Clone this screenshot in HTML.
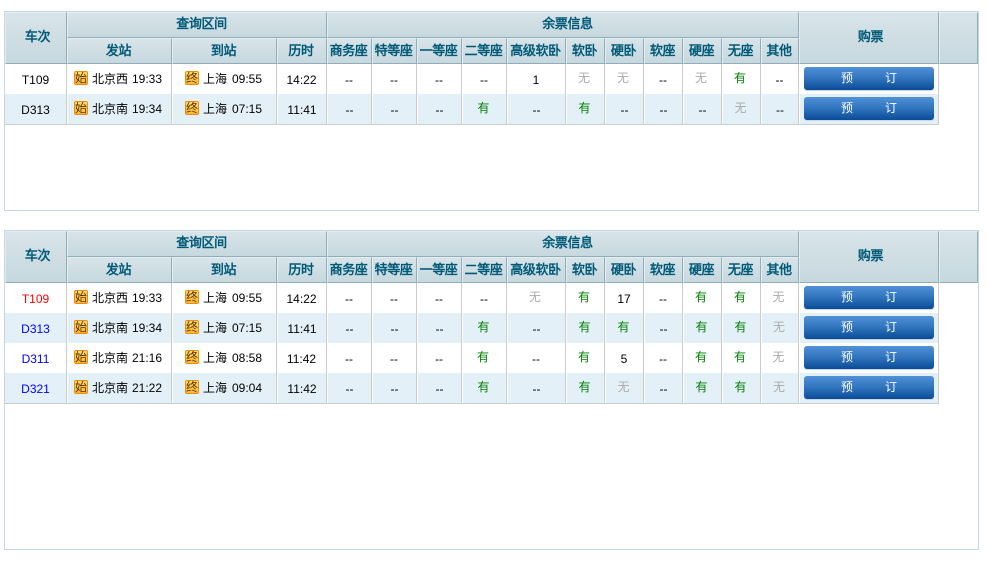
<!DOCTYPE html>
<html><head><meta charset="utf-8"><style>
html,body{margin:0;padding:0;background:#fff;width:988px;height:564px;overflow:hidden}
body{font:12px/16px "Liberation Sans","WenQuanYi Zen Hei",sans-serif;color:#000}
.box{position:absolute;left:4px;width:973px;border:1px solid #c4d6df;box-sizing:content-box}
.h{position:absolute;box-sizing:border-box;background:linear-gradient(#d8e4e9,#c6d8de);border-right:1px solid #90aeb9;border-bottom:1px solid #90aeb9;border-top:1px solid #e4edf0;border-left:1px solid #e4edf0;color:#005a77;font:bold 13px/24px "WenQuanYi Zen Hei",sans-serif;letter-spacing:-.4px;text-align:center;white-space:nowrap}
.t{height:52px;line-height:48px;padding-left:3px}
.n{height:26px;padding-right:2px}
.u{line-height:22px;padding-left:9px;padding-right:0}
.row{position:absolute;left:0;width:934px;height:30px;display:flex}
.b{background:#e3f0f7}
.row>div{box-sizing:border-box;position:relative;border-right:1px solid #ccc;text-align:center;line-height:32px;height:30px}
.b>div{border-left:1px solid #fff}
.b>div:first-child{border-left:0}
.last{height:1px;position:absolute;left:0;width:934px;background:#ccc}
.w0{width:62px}.w1{width:105px}.w2{width:50px}.w3{width:45px}.w4{width:59px}.w5{width:39px}.w6{width:38px}.w7{width:140px}
.s,.tm,.i{position:absolute;line-height:16px;white-space:nowrap}
.s{font-family:"WenQuanYi Zen Hei",sans-serif;font-size:12px;top:7px}
.tm{top:7px}
.i{top:7px;width:12px;height:12px;border:1px solid #ef8a10;border-radius:2px;background:linear-gradient(#ffe070,#ffb830);color:#5a3000;font:12px/12px "WenQuanYi Zen Hei",sans-serif;text-align:center;overflow:hidden}
.y,.no{font-family:"WenQuanYi Zen Hei",sans-serif;position:relative;top:-2px;left:-1px}
.y{color:#008000}.no{color:#aaa}
.btn{position:absolute;left:5px;top:3px;width:130px;height:23px;box-sizing:border-box;border-radius:3px;background:linear-gradient(#5291d8,#2f74bd 50%,#0a4b97);box-shadow:0 1px 0 #c9d8e6;color:#fff;font:12px/20px "WenQuanYi Zen Hei",sans-serif}
.btn span{position:absolute;top:1px}
.btn span:first-child{left:37px}.btn span:last-child{left:81px}
</style></head><body>

<div class="box" style="top:11px;height:198px">
<div class="h t" style="left:0;top:0;width:62px">车次</div>
<div class="h n u" style="left:62px;top:0;width:260px">查询区间</div>
<div class="h n u" style="left:322px;top:0;width:472px">余票信息</div>
<div class="h t" style="left:794px;top:0;width:140px">购票</div>
<div class="h t" style="left:934px;top:0;width:39px"></div>
<div class="h n" style="left:62px;top:26px;width:105px">发站</div>
<div class="h n" style="left:167px;top:26px;width:105px">到站</div>
<div class="h n" style="left:272px;top:26px;width:50px">历时</div>
<div class="h n" style="left:322px;top:26px;width:45px">商务座</div>
<div class="h n" style="left:367px;top:26px;width:45px">特等座</div>
<div class="h n" style="left:412px;top:26px;width:45px">一等座</div>
<div class="h n" style="left:457px;top:26px;width:45px">二等座</div>
<div class="h n" style="left:502px;top:26px;width:59px">高级软卧</div>
<div class="h n" style="left:561px;top:26px;width:39px">软卧</div>
<div class="h n" style="left:600px;top:26px;width:39px">硬卧</div>
<div class="h n" style="left:639px;top:26px;width:39px">软座</div>
<div class="h n" style="left:678px;top:26px;width:39px">硬座</div>
<div class="h n" style="left:717px;top:26px;width:39px">无座</div>
<div class="h n" style="left:756px;top:26px;width:38px">其他</div>

<div class="row" style="top:52px">
<div class="w0">T109</div>
<div class="w1"><span class="i" style="left:7px">始</span><span class="s" style="left:25px">北京西</span><span class="tm" style="left:65px">19:33</span></div>
<div class="w1"><span class="i" style="left:13px">终</span><span class="s" style="left:31px">上海</span><span class="tm" style="left:60px">09:55</span></div>
<div class="w2">14:22</div>
<div class="w3">--</div><div class="w3">--</div><div class="w3">--</div><div class="w3">--</div>
<div class="w4">1</div>
<div class="w5"><span class="no">无</span></div><div class="w5"><span class="no">无</span></div><div class="w5">--</div><div class="w5"><span class="no">无</span></div><div class="w5"><span class="y">有</span></div><div class="w6">--</div>
<div class="w7"><div class="btn"><span>预</span><span>订</span></div></div>
</div>
<div class="row b" style="top:82px">
<div class="w0">D313</div>
<div class="w1"><span class="i" style="left:6px">始</span><span class="s" style="left:24px">北京南</span><span class="tm" style="left:64px">19:34</span></div>
<div class="w1"><span class="i" style="left:12px">终</span><span class="s" style="left:30px">上海</span><span class="tm" style="left:59px">07:15</span></div>
<div class="w2">11:41</div>
<div class="w3">--</div><div class="w3">--</div><div class="w3">--</div><div class="w3"><span class="y">有</span></div>
<div class="w4">--</div>
<div class="w5"><span class="y">有</span></div><div class="w5">--</div><div class="w5">--</div><div class="w5">--</div><div class="w5"><span class="no">无</span></div><div class="w6">--</div>
<div class="w7"><div class="btn" style="left:4px"><span>预</span><span>订</span></div></div>
</div>
<div class="last" style="top:112px"></div>
</div>

<div class="box" style="top:230px;height:318px">
<div class="h t" style="left:0;top:0;width:62px">车次</div>
<div class="h n u" style="left:62px;top:0;width:260px">查询区间</div>
<div class="h n u" style="left:322px;top:0;width:472px">余票信息</div>
<div class="h t" style="left:794px;top:0;width:140px">购票</div>
<div class="h t" style="left:934px;top:0;width:39px"></div>
<div class="h n" style="left:62px;top:26px;width:105px">发站</div>
<div class="h n" style="left:167px;top:26px;width:105px">到站</div>
<div class="h n" style="left:272px;top:26px;width:50px">历时</div>
<div class="h n" style="left:322px;top:26px;width:45px">商务座</div>
<div class="h n" style="left:367px;top:26px;width:45px">特等座</div>
<div class="h n" style="left:412px;top:26px;width:45px">一等座</div>
<div class="h n" style="left:457px;top:26px;width:45px">二等座</div>
<div class="h n" style="left:502px;top:26px;width:59px">高级软卧</div>
<div class="h n" style="left:561px;top:26px;width:39px">软卧</div>
<div class="h n" style="left:600px;top:26px;width:39px">硬卧</div>
<div class="h n" style="left:639px;top:26px;width:39px">软座</div>
<div class="h n" style="left:678px;top:26px;width:39px">硬座</div>
<div class="h n" style="left:717px;top:26px;width:39px">无座</div>
<div class="h n" style="left:756px;top:26px;width:38px">其他</div>

<div class="row" style="top:52px">
<div class="w0" style="color:#f00">T109</div>
<div class="w1"><span class="i" style="left:7px">始</span><span class="s" style="left:25px">北京西</span><span class="tm" style="left:65px">19:33</span></div>
<div class="w1"><span class="i" style="left:13px">终</span><span class="s" style="left:31px">上海</span><span class="tm" style="left:60px">09:55</span></div>
<div class="w2">14:22</div>
<div class="w3">--</div><div class="w3">--</div><div class="w3">--</div><div class="w3">--</div>
<div class="w4"><span class="no">无</span></div>
<div class="w5"><span class="y">有</span></div><div class="w5">17</div><div class="w5">--</div><div class="w5"><span class="y">有</span></div><div class="w5"><span class="y">有</span></div><div class="w6"><span class="no">无</span></div>
<div class="w7"><div class="btn"><span>预</span><span>订</span></div></div>
</div>
<div class="row b" style="top:82px">
<div class="w0" style="color:#00f">D313</div>
<div class="w1"><span class="i" style="left:6px">始</span><span class="s" style="left:24px">北京南</span><span class="tm" style="left:64px">19:34</span></div>
<div class="w1"><span class="i" style="left:12px">终</span><span class="s" style="left:30px">上海</span><span class="tm" style="left:59px">07:15</span></div>
<div class="w2">11:41</div>
<div class="w3">--</div><div class="w3">--</div><div class="w3">--</div><div class="w3"><span class="y">有</span></div>
<div class="w4">--</div>
<div class="w5"><span class="y">有</span></div><div class="w5"><span class="y">有</span></div><div class="w5">--</div><div class="w5"><span class="y">有</span></div><div class="w5"><span class="y">有</span></div><div class="w6"><span class="no">无</span></div>
<div class="w7"><div class="btn" style="left:4px"><span>预</span><span>订</span></div></div>
</div>
<div class="row" style="top:112px">
<div class="w0" style="color:#00f">D311</div>
<div class="w1"><span class="i" style="left:7px">始</span><span class="s" style="left:25px">北京南</span><span class="tm" style="left:65px">21:16</span></div>
<div class="w1"><span class="i" style="left:13px">终</span><span class="s" style="left:31px">上海</span><span class="tm" style="left:60px">08:58</span></div>
<div class="w2">11:42</div>
<div class="w3">--</div><div class="w3">--</div><div class="w3">--</div><div class="w3"><span class="y">有</span></div>
<div class="w4">--</div>
<div class="w5"><span class="y">有</span></div><div class="w5">5</div><div class="w5">--</div><div class="w5"><span class="y">有</span></div><div class="w5"><span class="y">有</span></div><div class="w6"><span class="no">无</span></div>
<div class="w7"><div class="btn"><span>预</span><span>订</span></div></div>
</div>
<div class="row b" style="top:142px">
<div class="w0" style="color:#00f">D321</div>
<div class="w1"><span class="i" style="left:6px">始</span><span class="s" style="left:24px">北京南</span><span class="tm" style="left:64px">21:22</span></div>
<div class="w1"><span class="i" style="left:12px">终</span><span class="s" style="left:30px">上海</span><span class="tm" style="left:59px">09:04</span></div>
<div class="w2">11:42</div>
<div class="w3">--</div><div class="w3">--</div><div class="w3">--</div><div class="w3"><span class="y">有</span></div>
<div class="w4">--</div>
<div class="w5"><span class="y">有</span></div><div class="w5"><span class="no">无</span></div><div class="w5">--</div><div class="w5"><span class="y">有</span></div><div class="w5"><span class="y">有</span></div><div class="w6"><span class="no">无</span></div>
<div class="w7"><div class="btn" style="left:4px"><span>预</span><span>订</span></div></div>
</div>
<div class="last" style="top:172px"></div>
</div>
</body></html>
